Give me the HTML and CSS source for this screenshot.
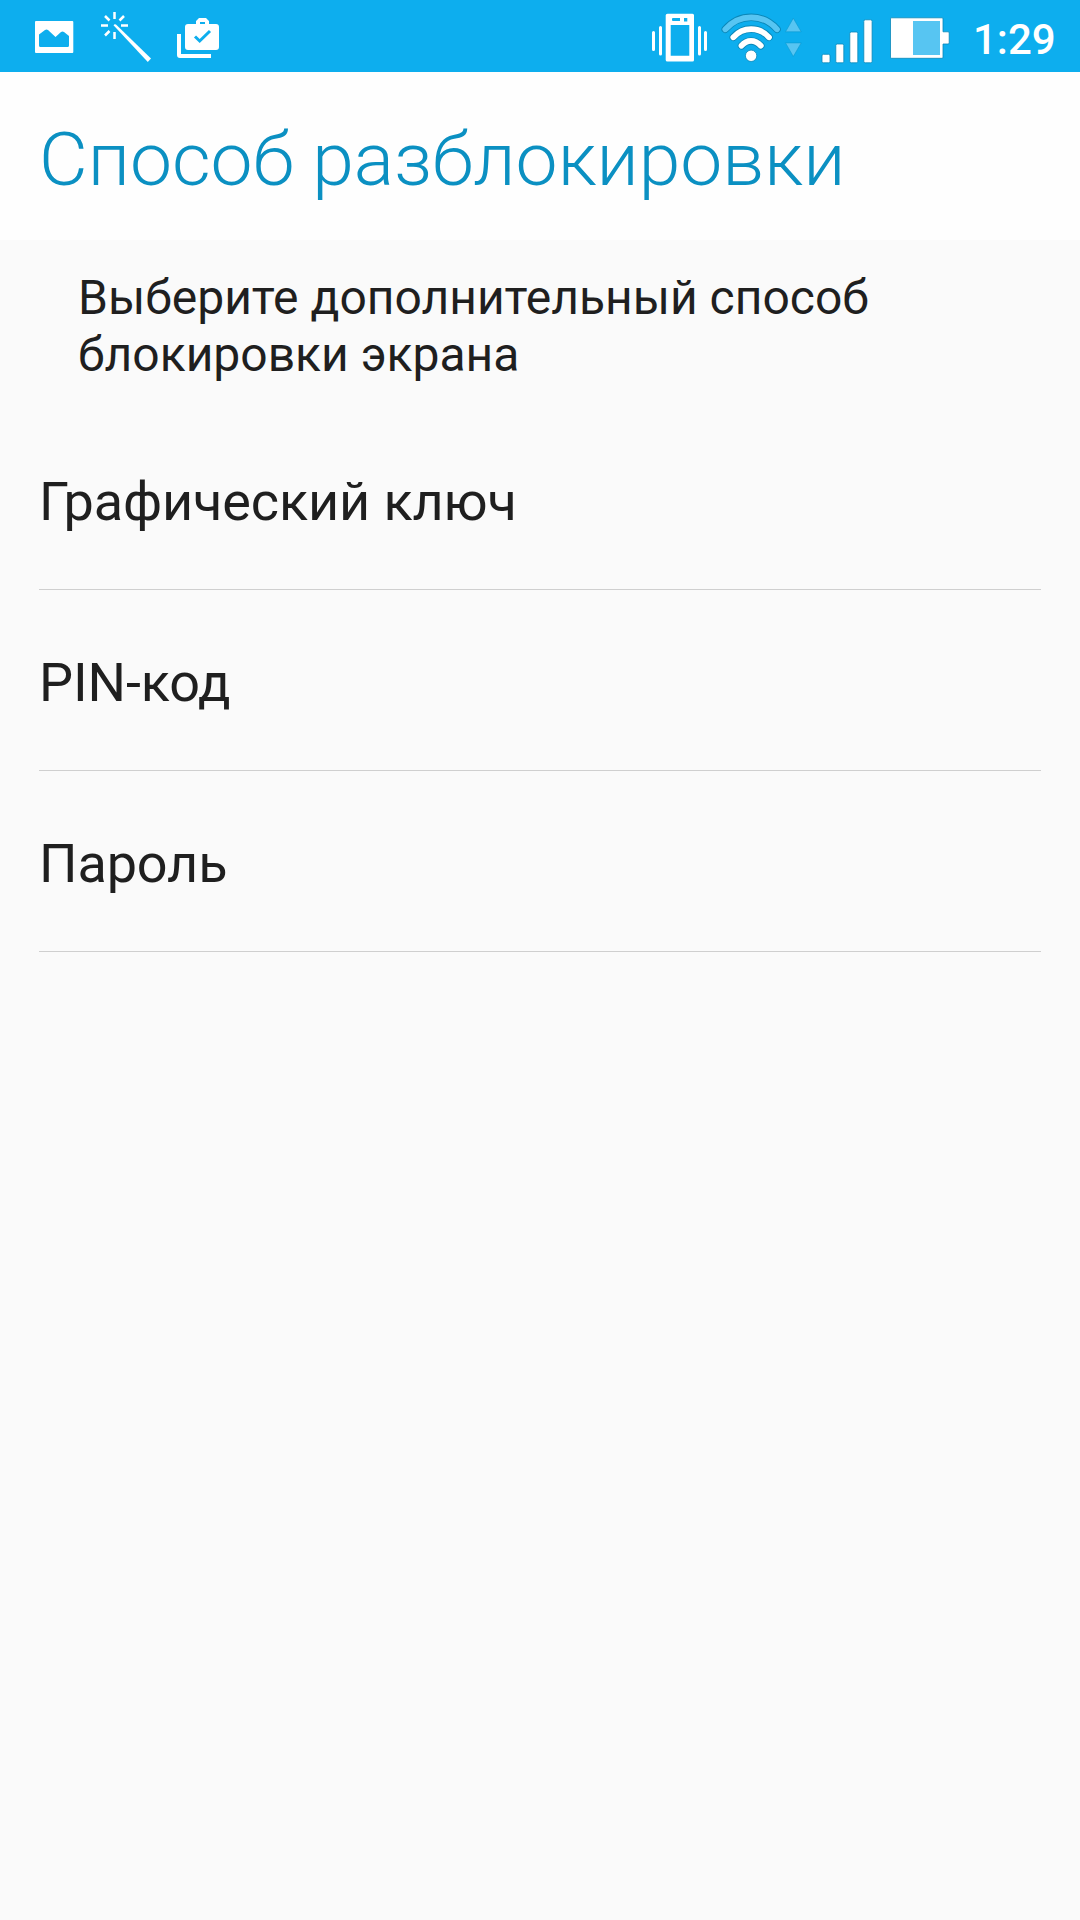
FILE: index.html
```html
<!DOCTYPE html>
<html lang="ru">
<head>
<meta charset="utf-8">
<title>Способ разблокировки</title>
<link rel="stylesheet" href="styles.css">
</head>
<body>
<header class="status-bar">
  <div class="notifications">
    <svg width="40" height="72" viewBox="34 0 40 72" aria-hidden="true">
      <path class="solid" fill-rule="evenodd" d="M36 21H72.3Q73.3 21 73.3 22V52Q73.3 53 72.3 53H36Q35 53 35 52V22Q35 21 36 21ZM39 34.5V45.5Q39 47 40.5 47H67.5Q69 47 69 45.5V36L64 32Q62.5 31 61 32L55.5 37L48 30Q46.5 28.800 45 30Z"/>
    </svg>
    <svg width="52" height="72" viewBox="99 0 52 72" aria-hidden="true">
      <path class="ray" d="M114.500 12V19M114.500 32V39M101 25.500H108M121 25.500H128M105 16L109.500 20.500M124 16L119.500 20.500M105 35.500L109.500 31"/>
      <path class="solid" d="M113.500 25.200Q114.500 23.500 116 24.500L151 58.500L147.800 62Z"/>
    </svg>
    <svg width="44" height="72" viewBox="176 0 44 72" aria-hidden="true">
      <path class="solid" fill-rule="evenodd" d="M188 24H196V21L199 18H206L209 21V24H216Q219 24 219 27V47Q219 50 216 50H188Q185 50 185 47V27Q185 24 188 24ZM200 22V24H205V22Z"/>
      <path class="solid" d="M177 34H181V54H211V58H180Q177 58 177 55Z"/>
      <path class="check" d="M195 36.500L199.700 41L210 31"/>
    </svg>
  </div>
  <div class="indicators">
    <svg class="vibrate" width="56" height="72" viewBox="652 0 56 72" aria-hidden="true">
      <path class="solid" fill-rule="evenodd" d="M667.500 13.700H692.500Q694 13.700 694 15.200V60Q694 61.500 692.500 61.500H667.500Q665.700 61.500 665.700 60V15.200Q665.700 13.700 667.500 13.700ZM670.700 25V55.700H689.300V25ZM673 18Q672 18 672 19V20Q672 21 673 21H680V18ZM684 18V21.500H687.300V18Z"/>
      <path class="wave" d="M653.500 32.500V49.500M660.500 27.500V54M699.500 27.500V54M705.500 32.500V49.500"/>
    </svg>
    <svg class="wifi" width="81" height="72" viewBox="721 0 81 72" aria-hidden="true">
      <path class="arc-edge" d="M725.300 29.300C739.500 13.300 762.800 13.300 777 29.300"/>
      <path class="arc-weak" d="M725.300 29.300C739.500 13.300 762.800 13.300 777 29.300"/>
      <path class="arc-edge" d="M733.300 37.300C743 26.300 759.300 26.300 769 37.300M741.500 45.700C747 39.300 755 39.300 760.800 45.700"/>
      <path class="arc" d="M733.300 37.300C743 26.300 759.300 26.300 769 37.300M741.500 45.700C747 39.300 755 39.300 760.800 45.700"/>
      <circle class="outlined" cx="751.100" cy="55.800" r="5.700"/>
      <path class="traffic" d="M793.300 18.200L801.200 31.800H785.500ZM785.500 42.900H801.200L793.300 56.500Z"/>
    </svg>
    <svg class="signal" width="52" height="72" viewBox="821 0 52 72" aria-hidden="true">
      <rect class="outlined" x="822" y="54.300" width="8" height="8.500" rx="1.500"/>
      <rect class="outlined" x="835.800" y="44" width="8" height="18.800" rx="1.500"/>
      <rect class="outlined" x="849.800" y="32" width="8" height="30.800" rx="1.500"/>
      <rect class="outlined" x="863.800" y="19.800" width="8.300" height="43" rx="1.500"/>
    </svg>
    <svg class="battery" width="60" height="72" viewBox="890 0 60 72" aria-hidden="true">
      <path class="outlined" d="M891.500 17.800H942Q943 17.800 943 18.800V31.800H948Q949.200 31.800 949.200 32.800V43Q949.200 44 948 44H943V57.300Q943 58.300 942 58.300H891.500Q890.500 58.300 890.500 57.300V18.800Q890.500 17.800 891.500 17.800Z"/>
      <rect class="charge-gap" x="913" y="21" width="27" height="34"/>
    </svg>
    <time class="clock">1:29</time>
  </div>
</header>
<h1 class="title">Способ разблокировки</h1>
<main>
  <p class="hint">Выберите дополнительный способ блокировки экрана</p>
  <ul class="methods">
    <li class="method">Графический ключ</li>
    <li class="method">PIN-код</li>
    <li class="method">Пароль</li>
  </ul>
</main>
</body>
</html>
```
FILE: styles.css
```css
* { box-sizing: border-box; }

body {
  margin: 0;
  min-height: 1920px;
  background: #fafafa;
  color: #1f1f1f;
  font-family: Roboto, sans-serif;
}

svg { display: block; flex: none; }

.status-bar {
  display: flex;
  justify-content: space-between;
  height: 72px;
  padding: 0 25px 0 34px;
  background: #0daeee;
}

.notifications { display: flex; gap: 25px; }
.indicators { display: flex; }

.solid { fill: #fff; }
.ray { fill: none; stroke: #fff; stroke-width: 2.5; }
.check { fill: none; stroke: #0daeee; stroke-width: 3; }
.wave { fill: none; stroke: #fff; stroke-width: 3; stroke-linecap: round; }
.arc-edge { fill: none; stroke: #0a87b8; stroke-width: 7.5; stroke-linecap: round; }
.arc { fill: none; stroke: #fff; stroke-width: 5.8; stroke-linecap: round; }
.arc-weak { fill: none; stroke: #57c5f2; stroke-width: 5.8; stroke-linecap: round; }
.outlined { fill: #fff; stroke: #0a87b8; stroke-width: 0.8; }
.traffic { fill: #57c5f2; stroke: #0a98ce; stroke-width: 0.6; stroke-linejoin: round; }
.charge-gap { fill: #57c5f2; }

.wifi { margin-left: 13px; }
.signal { margin-left: 19px; }
.battery { margin-left: 17px; }

.clock {
  width: 82px;
  margin-left: 23px;
  padding-top: 7px;
  color: #fff;
  font-size: 42px;
  font-weight: 500;
  line-height: 65px;
  white-space: nowrap;
}

.title {
  height: 168px;
  margin: 0;
  padding: 6px 39px 0;
  background: #fefefe;
  color: #0b90c2;
  font-size: 75px;
  font-weight: 300;
  line-height: 162px;
}

.hint {
  margin: 0;
  padding: 29px 78px 26px;
  font-size: 48px;
  line-height: 57px;
}

.methods {
  margin: 0;
  padding: 0 39px;
  list-style: none;
}

.method {
  height: 181px;
  padding-top: 5px;
  border-bottom: 1px solid #cfcfcf;
  font-size: 54px;
  letter-spacing: -0.12px;
  line-height: 175px;
}
```
